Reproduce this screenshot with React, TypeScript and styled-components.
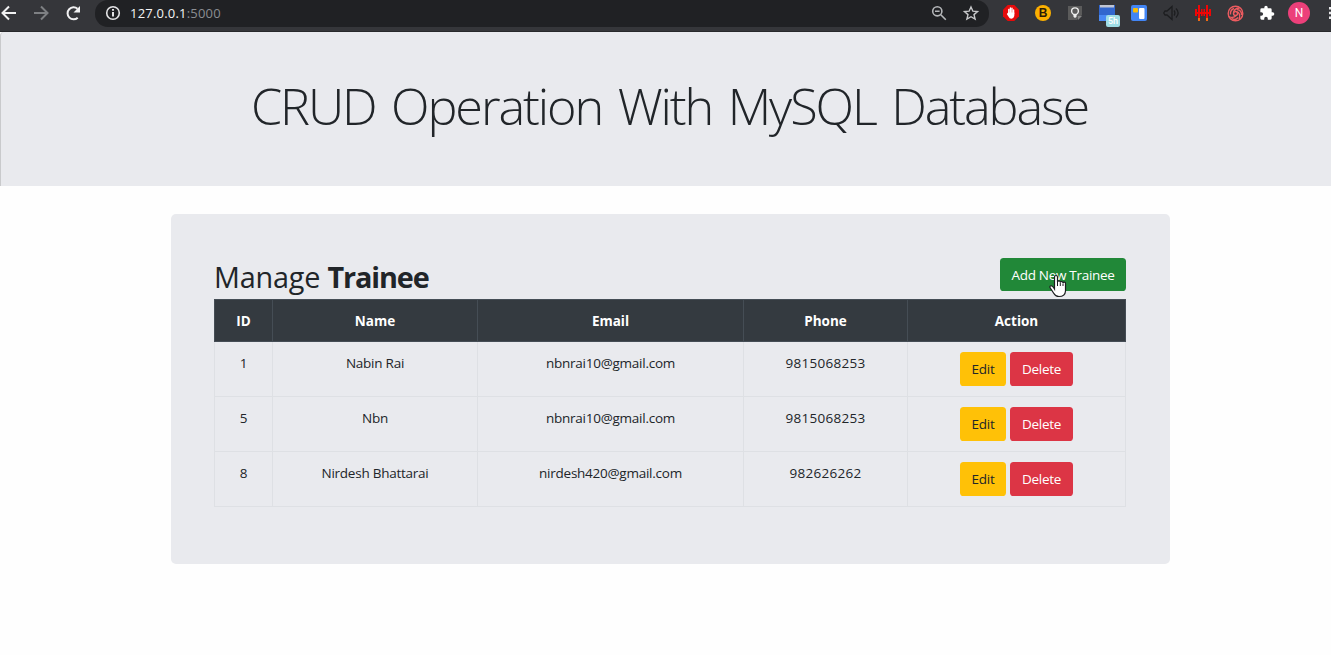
import React from "react";
import styled, { createGlobalStyle } from "styled-components";

const Global = createGlobalStyle`
  *, *::before, *::after { box-sizing: border-box; }
  html, body { margin: 0; background: #fefefe; overflow: hidden; }
  body {
    font-family: "Open Sans", "Noto Sans", sans-serif;
    font-size: 14px;
    line-height: 21.6px;
    color: #212529;
  }
`;

const Page = styled.div`
  width: 1331px;
  height: 655px;
  overflow: hidden;
`;

const Toolbar = styled.header`
  display: flex;
  height: 32px;
  background: #35363a;
  border-bottom: 1px solid #27282b;
`;

const NavIcons = styled.nav`
  display: flex;
  width: 95px;
  height: 26px;
  align-items: center;
  gap: 12px;
  flex: none;
`;

const AddressBar = styled.div`
  display: flex;
  align-items: center;
  width: 894px;
  height: 27px;
  padding: 0 8px 1px;
  background: #202124;
  border-radius: 13px;
  flex: none;
`;

const Url = styled.span`
  flex: 1;
  padding-left: 7px;
  font-size: 13px;
  line-height: 20px;
  letter-spacing: 0.2px;
  color: #f4f4f5;
`;

const Port = styled.span`
  color: #8b8e92;
`;

const BarActions = styled.div`
  display: flex;
  gap: 12px;
`;

const Extensions = styled.div`
  display: flex;
  align-items: center;
  height: 26px;
  gap: 8px;
  padding-left: 10px;
`;

const ExtSlot = styled.div`
  position: relative;
  display: flex;
  align-items: center;
  justify-content: center;
  width: 24px;
  height: 26px;
  flex: none;
`;

const Coin = styled.span`
  width: 16px;
  height: 16px;
  border-radius: 50%;
  background: #fbb000;
  color: #2b1d06;
  font: 700 12px/16px "Liberation Sans", sans-serif;
  text-align: center;
`;

const Avatar = styled.span`
  width: 22px;
  height: 22px;
  border-radius: 50%;
  background: #ec407a;
  color: #fff;
  font: 400 12px/22px Roboto, sans-serif;
  text-align: center;
  flex: none;
`;

const Badge = styled.span`
  position: absolute;
  left: 11px;
  top: 15px;
  width: 14px;
  height: 12px;
  border-radius: 2px;
  background: #9fdde5;
  color: #fff;
  font: 500 9px/13px Roboto, sans-serif;
  text-align: center;
`;

const Hero = styled.section`
  height: 154px;
  padding-top: 43px;
  background: #e9eaee;
  border-left: 1px solid #c9cacc;
  border-top-left-radius: 4px;
  text-align: center;
`;

const Title = styled.h1`
  margin: 0;
  padding-left: 7px;
  font-family: "Open Sans", sans-serif;
  font-weight: 300;
  font-size: 50.4px;
  line-height: 61px;
  letter-spacing: -2.1px;
  word-spacing: 4.5px;
  white-space: nowrap;
`;

const Panel = styled.main`
  width: 999px;
  height: 350px;
  margin: 28px 0 0 171px;
  padding: 44px 44px 0 43px;
  background: #e9eaee;
  border-radius: 5px;
`;

const PanelHead = styled.div`
  display: flex;
  justify-content: space-between;
  height: 41px;
`;

const Heading = styled.h2`
  margin: 0;
  padding: 2px 0 0;
  font-weight: 400;
  font-size: 28.8px;
  line-height: 34px;
  letter-spacing: -0.2px;
  white-space: nowrap;

  b {
    letter-spacing: -1.1px;
  }
`;

const Button = styled.button<{ $bg: string; $w: number; $ink?: string; $h?: number; $drop?: number }>`
  position: relative;
  width: ${(p) => p.$w}px;
  height: ${(p) => p.$h ?? 34}px;
  padding: ${(p) => p.$drop ?? 1}px 0 0;
  border: 0;
  border-radius: 3.6px;
  background: ${(p) => p.$bg};
  color: ${(p) => p.$ink ?? "#fff"};
  font: inherit;
  font-size: 13.5px;
  letter-spacing: -0.3px;
  white-space: nowrap;
`;

const Cursor = styled.svg`
  position: absolute;
  left: 48px;
  top: 16px;
`;

const Table = styled.table`
  width: 912px;
  table-layout: fixed;
  border-collapse: collapse;
  text-align: center;
`;

const Th = styled.th`
  height: 42px;
  padding: 2px 0 0;
  border: 1px solid #454d55;
  background: #343a40;
  color: #fff;
  font-size: 13.5px;
  font-weight: 700;
`;

const Td = styled.td<{ $top?: number; $track?: number }>`
  height: 55px;
  padding: ${(p) => p.$top ?? 11}px 0 0;
  border: 1px solid #dee0e4;
  vertical-align: top;
  font-size: 13.5px;
  letter-spacing: ${(p) => p.$track ?? -0.25}px;
`;

const Actions = styled.div`
  display: flex;
  justify-content: center;
  gap: 4px;
`;

const trainees = [
  { id: 1, name: "Nabin Rai", email: "nbnrai10@gmail.com", phone: "9815068253" },
  { id: 5, name: "Nbn", email: "nbnrai10@gmail.com", phone: "9815068253" },
  { id: 8, name: "Nirdesh Bhattarai", email: "nirdesh420@gmail.com", phone: "982626262" },
];

const columns: [string, number][] = [
  ["ID", 58],
  ["Name", 205],
  ["Email", 266],
  ["Phone", 164],
  ["Action", 218],
];

function BrowserBar() {
  return (
    <Toolbar>
      <NavIcons>
        <svg width="20" height="20" viewBox="0 0 20 20" fill="none" stroke="#f1f1f2" strokeWidth="2">
          <path d="M16 10H3M9 3.5 2.5 10 9 16.5" />
        </svg>
        <svg width="20" height="20" viewBox="0 0 20 20" fill="none" stroke="#7e8083" strokeWidth="2">
          <path d="M2 10h13M9 3.5l6.500 6.500L9 16.500" />
        </svg>
        <svg width="20" height="20" viewBox="0 0 20 20">
          <path d="M13.700 14.700A6 6 0 1 1 13.500 5.800" fill="none" stroke="#f1f1f2" strokeWidth="2" />
          <path d="M16 3v6.500H9.500z" fill="#f1f1f2" />
        </svg>
      </NavIcons>
      <AddressBar>
        <svg width="20" height="20" viewBox="0 0 20 20" fill="none" stroke="#e4e4e6" strokeWidth="1.600">
          <circle cx="10" cy="10" r="6.300" />
          <path d="M10 9v4.500M10 6v1.800" strokeWidth="2" />
        </svg>
        <Url>
          127.0.0.1<Port>:5000</Port>
        </Url>
        <BarActions>
          <svg width="20" height="20" viewBox="0 0 20 20" fill="none" stroke="#b4b6b9" strokeWidth="1.600">
            <circle cx="8.300" cy="8.300" r="4.600" />
            <path d="M11.800 11.800l5 5M6 8.300h4.600" />
          </svg>
          <svg width="20" height="20" viewBox="0 0 20 20" fill="none" stroke="#c7c8ca" strokeWidth="1.400">
            <path d="M10 4l1.900 4.200 4.600.4-3.500 3 1.100 4.500-4.100-2.400-4.100 2.400L7 11.600l-3.500-3 4.600-.4z" />
          </svg>
        </BarActions>
      </AddressBar>
      <Extensions>
        <ExtSlot>
          <svg width="16" height="16" viewBox="0 0 16 16">
            <path d="M4.700 0h6.600L16 4.700v6.600L11.300 16H4.700L0 11.300V4.700z" fill="#e50b0b" />
            <path
              d="M5.800 9V4.500M7.400 8V3M9 8V3.200M10.600 9V5"
              stroke="#fff"
              strokeWidth="1.400"
              strokeLinecap="round"
            />
            <path d="M5.100 7.500h6.200V11q-.7 2.700-2.900 2.700-2 0-3-2.200L3.800 9z" fill="#fff" />
          </svg>
        </ExtSlot>
        <ExtSlot>
          <Coin>B</Coin>
        </ExtSlot>
        <ExtSlot>
          <svg width="16" height="16" viewBox="0 0 16 16">
            <path d="M1 1h14v9l-5 5H1z" fill="#5b5b5b" />
            <path d="M11 15v-4h4z" fill="#858585" />
            <path
              d="M6.600 9.500Q4.600 8.300 4.600 6.300a3.400 3.400 0 0 1 6.800 0q0 2-2 3.200z"
              fill="none"
              stroke="#eee"
              strokeWidth="1.400"
            />
            <path d="M6.500 10h3v1.800l-1 1h-1l-1-1z" fill="#eee" />
          </svg>
        </ExtSlot>
        <ExtSlot>
          <svg width="16" height="16" viewBox="0 0 16 16">
            <path d="M0 0h16v16H0z" fill="#3267ce" />
            <path d="M1 0h14v2.500H1z" fill="#c0c5d2" />
            <path d="M0 10h8v6H0z" fill="#4a8af4" />
          </svg>
          <Badge>5h</Badge>
        </ExtSlot>
        <ExtSlot>
          <svg width="16" height="16" viewBox="0 0 16 16">
            <rect width="16" height="16" rx="2" fill="#4285f4" />
            <rect x="2" y="3" width="5" height="4.500" rx="1" fill="#fbbc04" />
            <rect x="8" y="3" width="5.500" height="11" rx="1" fill="#fff" />
          </svg>
        </ExtSlot>
        <ExtSlot>
          <svg width="16" height="16" viewBox="0 0 16 16" fill="none" stroke="#1c1d1f" strokeWidth="1.300">
            <path d="M.7 8 2 6h2l5-4.500v13L4 10H2zM11 5.500q1.800 2.500 0 5M13 3.500q4.300 4.500 0 9" />
          </svg>
        </ExtSlot>
        <ExtSlot>
          <svg width="16" height="16" viewBox="0 0 16 16" fill="#f00606">
            <path d="M0 4h2v7H0zM3 0h2v13H3zM6 4h1.500v7H6zM8.500 4H10v7H8.500zM11 0h2v13h-2zM14 4h2v7h-2zM2 7h12v2H2z" />
            <path d="M3 13h2v3H3zM11 13h2v3h-2z" fill="#f16a12" />
          </svg>
        </ExtSlot>
        <ExtSlot>
          <svg width="17" height="17" viewBox="0 0 17 17" fill="none" stroke="#ee5c60" strokeWidth="1.400">
            <circle cx="8.500" cy="8.500" r="7.300" />
            <circle cx="8.500" cy="8.500" r="2" />
            <path d="M6.500 8.500Q6.500 3.500 12.500 3M9.500 6.700Q14 8 12.200 14M9.500 10.300Q6 14 2 11.500M3.500 9.500Q3 5 7 3.500M10 4.500Q15 5.500 14.500 10M11 12.500Q8 16 4.500 13" />
          </svg>
        </ExtSlot>
        <ExtSlot>
          <svg width="16" height="16" viewBox="0 0 24 24" fill="#fff">
            <path d="M20.500 11H19V7a2 2 0 0 0-2-2h-4V3.500a2.500 2.500 0 0 0-5 0V5H4a2 2 0 0 0-2 2v3.800h1.500a2.700 2.700 0 0 1 0 5.400H2V20a2 2 0 0 0 2 2h3.800v-1.500a2.700 2.700 0 0 1 5.400 0V22H17a2 2 0 0 0 2-2v-4h1.500a2.500 2.500 0 0 0 0-5z" />
          </svg>
        </ExtSlot>
        <ExtSlot>
          <Avatar>N</Avatar>
        </ExtSlot>
        <svg width="12" height="16" viewBox="0 0 12 16" fill="#e8e8ea">
          <path d="M10 2h3v2.500h-3zM10 6.800h3v2.500h-3zM10 11.500h3V14h-3z" />
        </svg>
      </Extensions>
    </Toolbar>
  );
}

function HandCursor() {
  return (
    <Cursor width="20" height="24" viewBox="0 0 20 24">
      <path
        d="M6.500 14V3a1.500 1.500 0 0 1 3 0v5a1.400 1.400 0 0 1 2.800.4A1.400 1.400 0 0 1 15 9a1.300 1.300 0 0 1 2.500.7V17q-.3 5.500-6.500 5.500-3.500 0-5.300-3.300L2 13.500q-.4-2 1.500-1.700 1.500.6 3 3.200z"
        fill="#fff"
        stroke="#1b1d1f"
        strokeWidth="1.200"
      />
      <path d="M9.500 8v4M12.300 8.500V12M15 9.500V12" stroke="#1b1d1f" />
    </Cursor>
  );
}

export default function App() {
  return (
    <Page>
      <Global />
      <BrowserBar />
      <Hero>
        <Title>CRUD Operation With MySQL Database</Title>
      </Hero>
      <Panel>
        <PanelHead>
          <Heading>
            Manage <b>Trainee</b>
          </Heading>
          <Button $bg="#218838" $w={126} $h={33} $drop={3}>
            Add New Trainee
            <HandCursor />
          </Button>
        </PanelHead>
        <Table>
          <colgroup>
            {columns.map(([label, width]) => (
              <col key={label} width={width} />
            ))}
          </colgroup>
          <thead>
            <tr>
              {columns.map(([label]) => (
                <Th key={label}>{label}</Th>
              ))}
            </tr>
          </thead>
          <tbody>
            {trainees.map((t) => (
              <tr key={t.id}>
                <Td>{t.id}</Td>
                <Td>{t.name}</Td>
                <Td>{t.email}</Td>
                <Td $track={0.3}>{t.phone}</Td>
                <Td $top={10}>
                  <Actions>
                    <Button $bg="#ffc107" $ink="#212529" $w={46}>
                      Edit
                    </Button>
                    <Button $bg="#dc3545" $w={63}>
                      Delete
                    </Button>
                  </Actions>
                </Td>
              </tr>
            ))}
          </tbody>
        </Table>
      </Panel>
    </Page>
  );
}
